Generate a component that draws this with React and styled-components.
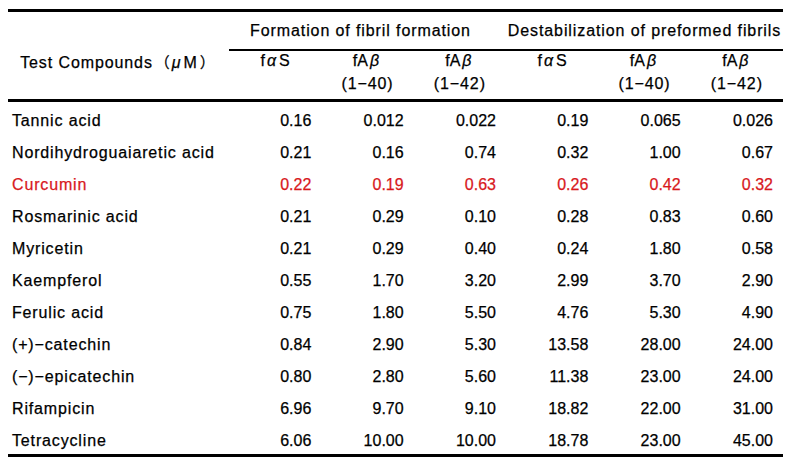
import React from 'react'
import styled, { createGlobalStyle } from 'styled-components';

const GlobalStyle = createGlobalStyle`
body {
    margin: 0;
    background: #fff;
    font-family: "Liberation Sans", Arial, "Noto Sans CJK JP", sans-serif;
    color: #000;
}
`;

const rows = [
    { name: 'Tannic acid', values: ['0.16', '0.012', '0.022', '0.19', '0.065', '0.026'] },
    { name: 'Nordihydroguaiaretic acid', values: ['0.21', '0.16', '0.74', '0.32', '1.00', '0.67'] },
    { name: 'Curcumin', values: ['0.22', '0.19', '0.63', '0.26', '0.42', '0.32'], hot: true },
    { name: 'Rosmarinic acid', values: ['0.21', '0.29', '0.10', '0.28', '0.83', '0.60'] },
    { name: 'Myricetin', values: ['0.21', '0.29', '0.40', '0.24', '1.80', '0.58'] },
    { name: 'Kaempferol', values: ['0.55', '1.70', '3.20', '2.99', '3.70', '2.90'] },
    { name: 'Ferulic acid', values: ['0.75', '1.80', '5.50', '4.76', '5.30', '4.90'] },
    { name: '(+)−catechin', values: ['0.84', '2.90', '5.30', '13.58', '28.00', '24.00'] },
    { name: '(−)−epicatechin', values: ['0.80', '2.80', '5.60', '11.38', '23.00', '24.00'] },
    { name: 'Rifampicin', values: ['6.96', '9.70', '9.10', '18.82', '22.00', '31.00'] },
    { name: 'Tetracycline', values: ['6.06', '10.00', '10.00', '18.78', '23.00', '45.00'] },
];

const subHeads = [
    { kind: 'aS' },
    { kind: 'aB', range: '(1−40)' },
    { kind: 'aB', range: '(1−42)' },
    { kind: 'aS' },
    { kind: 'aB', range: '(1−40)' },
    { kind: 'aB', range: '(1−42)' },
];

const App = () => {
    return (
        <>
            <GlobalStyle />
            <Page>
                <Table>
                    <colgroup>
                        <col style={{ width: 221 }} />
                        {subHeads.map((_, i) => <col key={i} />)}
                    </colgroup>
                    <thead>
                        <tr>
                            <CornerHead rowSpan={2}>
                                Test Compounds<Wide>（</Wide><G>μ</G>M<Wide>）</Wide>
                            </CornerHead>
                            <GroupHead colSpan={3} $shift>Formation of fibril formation</GroupHead>
                            <GroupHead colSpan={3}>Destabilization of preformed fibrils</GroupHead>
                        </tr>
                        <tr>
                            {subHeads.map((s, i) => (
                                <SubHead key={i}>
                                    <SubLine>
                                        {s.kind === 'aS'
                                            ? <>f<G $gap>α</G>S</>
                                            : <>fA<G $gap>β</G></>}
                                    </SubLine>
                                    <RangeLine>{s.range || '\u00a0'}</RangeLine>
                                </SubHead>
                            ))}
                        </tr>
                    </thead>
                    <tbody>
                        {rows.map((r, i) => (
                            <Row key={r.name} $hot={r.hot} $last={i === rows.length - 1}>
                                <NameCell>{r.name}</NameCell>
                                {r.values.map((v, j) => <NumCell key={j}>{v}</NumCell>)}
                            </Row>
                        ))}
                    </tbody>
                </Table>
            </Page>
        </>
    )
}

export default App;

const Page = styled.div`
padding: 9px 5px 0 8px;
`;

const Table = styled.table`
width: 775px;
table-layout: fixed;
border-collapse: separate;
border-spacing: 0;
border-top: 3px solid #000;
font-size: 16px;
-webkit-text-stroke: 0.25px currentColor;
`;

const Wide = styled.span`
font-family: "Noto Sans CJK JP", sans-serif;
letter-spacing: 0;
font-size: 15px;
margin: 0 2px;
`;

const G = styled.span`
font-style: italic;
letter-spacing: 0;
margin: ${p => p.$gap ? '0 3px 0 2px' : '0 3px 0 0'};
`;

const CornerHead = styled.th`
vertical-align: top;
padding: 41px 0 0 0;
line-height: 18px;
font-weight: normal;
text-align: center;
letter-spacing: 0.9px;
white-space: nowrap;
border-bottom: 3px solid #000;
`;

const GroupHead = styled.th`
padding: 0 ${p => p.$shift ? '14px' : '0'} 0 0;
line-height: 37px;
font-weight: normal;
text-align: center;
letter-spacing: 0.9px;
white-space: nowrap;
border-bottom: 2px solid #000;
`;

const SubHead = styled.th`
vertical-align: top;
padding: 0 0 2px 0;
font-weight: normal;
text-align: center;
border-bottom: 3px solid #000;
`;

const SubLine = styled.div`
line-height: 20px;
height: 20px;
`;

const RangeLine = styled.div`
line-height: 26px;
height: 26px;
letter-spacing: 0.9px;
`;

const Row = styled.tr`
color: ${p => p.$hot ? '#d8181d' : '#000'};
td {
    padding-top: 6px;
    padding-bottom: 0;
    line-height: 26px;
    vertical-align: top;
    border-bottom: ${p => p.$last ? '3px solid #000' : 'none'};
}
`;

const NameCell = styled.td`
padding-left: 4px;
text-align: left;
letter-spacing: 0.85px;
white-space: nowrap;
`;

const NumCell = styled.td`
padding-right: 10px;
text-align: right;
`;
